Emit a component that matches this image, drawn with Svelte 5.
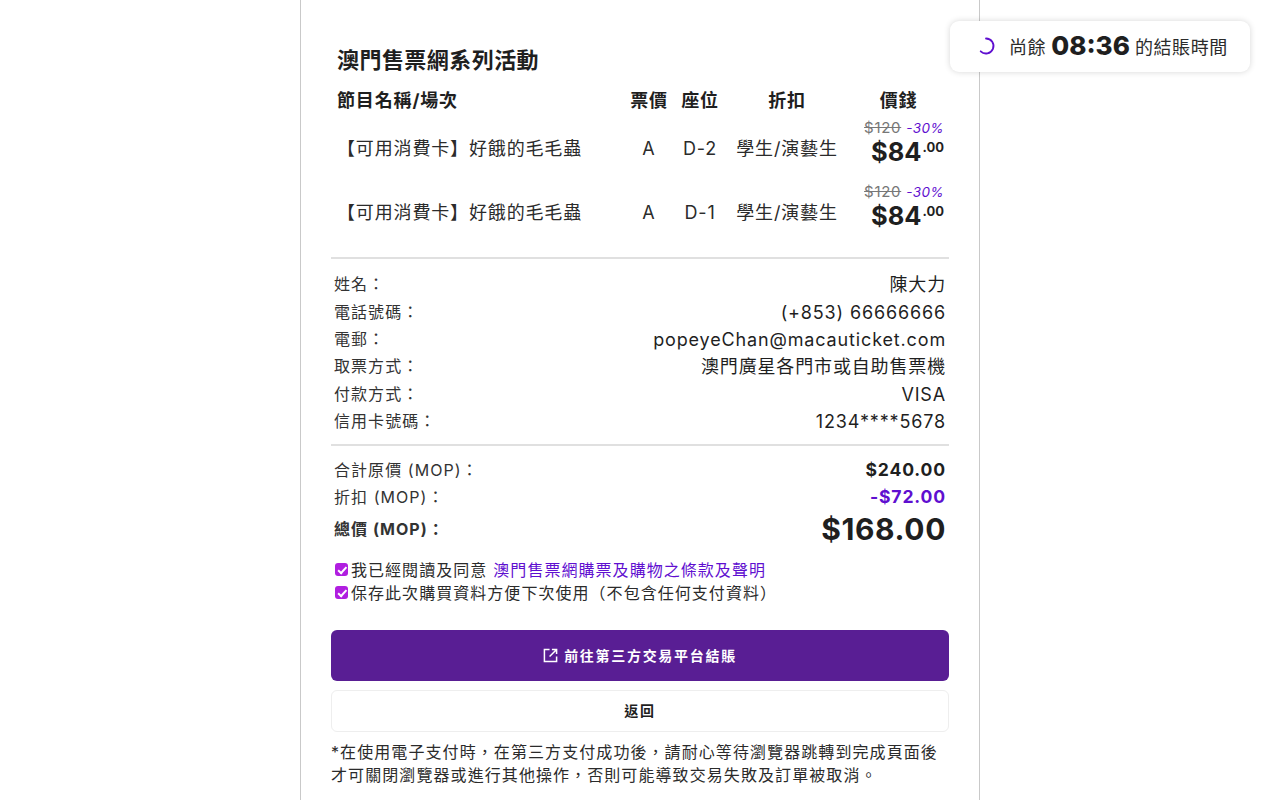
<script>
  const tickets = [
    { name: '【可用消費卡】好餓的毛毛蟲', zone: 'A', seat: 'D-2', type: '學生/演藝生' },
    { name: '【可用消費卡】好餓的毛毛蟲', zone: 'A', seat: 'D-1', type: '學生/演藝生' }
  ];

  const buyer = [
    ['姓名：', '陳大力'],
    ['電話號碼：', '(+853) 66666666'],
    ['電郵：', 'popeyeChan@macauticket.com'],
    ['取票方式：', '澳門廣星各門市或自助售票機'],
    ['付款方式：', 'VISA'],
    ['信用卡號碼：', '1234****5678']
  ];
</script>

<div class="page">
  <main class="panel">
    <h2>澳門售票網系列活動</h2>

    <div class="row head">
      <div class="name">節目名稱/場次</div>
      <div>票價</div>
      <div>座位</div>
      <div>折扣</div>
      <div class="total-col">價錢</div>
    </div>
    {#each tickets as t}
      <div class="row item">
        <div class="name">{t.name}</div>
        <div>{t.zone}</div>
        <div>{t.seat}</div>
        <div>{t.type}</div>
        <div class="price">
          <div class="was"><s>$120</s><em>-30%</em></div>
          <div class="now">$84<sup>.00</sup></div>
        </div>
      </div>
    {/each}

    <hr class="first" />

    <div class="info">
      {#each buyer as b}
        <div class="line"><span class="label">{b[0]}</span><span class="val">{b[1]}</span></div>
      {/each}
    </div>

    <hr class="second" />

    <div class="totals">
      <div class="line"><span class="label">合計原價 (MOP)：</span><span class="val bold">$240.00</span></div>
      <div class="line"><span class="label">折扣 (MOP)：</span><span class="val bold purple">-$72.00</span></div>
      <div class="line total"><span class="label">總價 (MOP)：</span><span class="big">$168.00</span></div>
    </div>

    <div class="checks">
      <label><input type="checkbox" checked />我已經閱讀及同意 <a href="#terms">澳門售票網購票及購物之條款及聲明</a></label>
      <label><input type="checkbox" checked />保存此次購買資料方便下次使用（不包含任何支付資料）</label>
    </div>

    <button class="pay">
      <svg width="15" height="15" viewBox="0 0 16 16" fill="none" stroke="currentColor" stroke-width="1.6">
        <path d="M7 1.5H1.5v13h13V9" />
        <path d="M9.5 1.5h5v5M14.5 1.5 7 9" />
      </svg>
      前往第三方交易平台結賬
    </button>
    <button class="back">返回</button>

    <p class="note">*在使用電子支付時，在第三方支付成功後，請耐心等待瀏覽器跳轉到完成頁面後才可關閉瀏覽器或進行其他操作，否則可能導致交易失敗及訂單被取消。</p>
  </main>

  <div class="timer">
    <svg class="spin" width="20" height="20" viewBox="0 0 20 20" fill="none">
      <path d="M10 2.5A7.5 7.5 0 1 1 4.7 15.3" stroke="#5f0fd0" stroke-width="1.8" stroke-linecap="round" />
    </svg>
    <span>尚餘</span>
    <b>08:36</b>
    <span>的結賬時間</span>
  </div>
</div>

<style>
  :global(body) {
    background: #fff;
    color: #1f1f1f;
    font-family: Inter, "Noto Sans CJK TC", sans-serif;
  }
  .page {
    position: relative;
    height: 800px;
    overflow: hidden;
  }
  .panel {
    box-sizing: border-box;
    width: 680px;
    height: 800px;
    margin-left: 300px;
    padding: 45px 30px 0;
    border-left: 1px solid #c9c9c9;
    border-right: 1px solid #c9c9c9;
  }
  h2 {
    margin: 0 0 0 6px;
    font-size: 22px;
    line-height: 31px;
    font-weight: 700;
    letter-spacing: 0.45px;
  }
  .row {
    box-sizing: border-box;
    display: grid;
    grid-template-columns: 288px 60px 42px 132px 1fr;
    align-items: center;
    padding-top: 4px;
    text-align: center;
    font-size: 18px;
    line-height: 26px;
    letter-spacing: 0.85px;
  }
  .row .name {
    text-align: left;
    padding-left: 6px;
  }
  .head {
    margin: 8px 0 2px;
    height: 29px;
    font-weight: 700;
  }
  .head .total-col {
    padding-right: 5px;
  }
  .item {
    height: 64px;
    color: #2b2b2b;
  }
  .price {
    text-align: right;
    padding: 0 5px 12px 0;
  }
  .was {
    font-size: 13.5px;
    line-height: 17px;
    letter-spacing: 0.4px;
    color: #777;
  }
  .was s {
    font-size: 15px;
    letter-spacing: 0.7px;
  }
  .was em {
    margin-left: 5px;
    color: #5f0fd0;
  }
  .now {
    font-size: 25.5px;
    line-height: 30px;
    font-weight: 700;
    letter-spacing: 0;
    color: #1f1f1f;
  }
  .now sup {
    margin-left: 1px;
    font-size: 13px;
    line-height: 0;
    vertical-align: 9px;
  }
  hr {
    height: 2px;
    margin: 0;
    border: 0;
    background: #e0e0e0;
  }
  hr.first {
    margin-top: 14px;
  }
  .info {
    padding-top: 10px;
  }
  .line {
    box-sizing: border-box;
    display: flex;
    justify-content: space-between;
    align-items: center;
    padding: 4px 3px 0;
    height: 27.4px;
    font-size: 18px;
    line-height: 23px;
    letter-spacing: 0.85px;
  }
  .label {
    font-size: 16px;
    letter-spacing: 1.05px;
    color: #333;
  }
  hr.second {
    margin-top: 11px;
  }
  .totals {
    padding-top: 8px;
  }
  .bold {
    margin-bottom: 2px;
    font-weight: 700;
    font-size: 17.6px;
  }
  .purple {
    color: #5f0fd0;
  }
  .line.total {
    height: 38px;
    margin-top: 1px;
    padding-top: 0;
  }
  .total .label {
    font-weight: 700;
  }
  .big {
    font-size: 30px;
    font-weight: 700;
    letter-spacing: 0.6px;
  }
  .checks {
    margin-top: 11px;
    padding-left: 4px;
    font-size: 16px;
    letter-spacing: 1.04px;
    line-height: 23px;
  }
  .checks label {
    display: flex;
    align-items: center;
    color: #2b2b2b;
  }
  .checks input {
    appearance: none;
    position: relative;
    width: 13px;
    height: 13px;
    margin: 0 3px 2px 0;
    border-radius: 3px;
    background: #b01ee0;
  }
  .checks input::after {
    content: "";
    position: absolute;
    left: 4.5px;
    top: 1.5px;
    width: 3px;
    height: 6.5px;
    border: solid #fff;
    border-width: 0 2px 2px 0;
    transform: rotate(42deg);
  }
  .checks a {
    margin-left: 6px;
    color: #5f0fd0;
    text-decoration: none;
  }
  button {
    display: flex;
    align-items: center;
    justify-content: center;
    gap: 6px;
    width: 100%;
    padding: 0 0 2px;
    font-family: inherit;
    font-weight: 700;
    font-size: 14px;
    letter-spacing: 1.7px;
    border-radius: 6px;
  }
  button svg {
    margin-top: 2px;
  }
  .pay {
    height: 51px;
    margin-top: 25px;
    border: 0;
    background: #591e94;
    color: #fff;
  }
  .back {
    height: 42px;
    margin-top: 9px;
    border: 1px solid #eee;
    background: #fff;
    color: #1f1f1f;
  }
  .note {
    margin: 9px 0 0;
    font-size: 16px;
    line-height: 23px;
    letter-spacing: 1.08px;
    color: #2b2b2b;
  }
  .timer {
    position: absolute;
    top: 21px;
    left: 950px;
    box-sizing: border-box;
    width: 300px;
    height: 51px;
    display: flex;
    align-items: center;
    gap: 5px;
    padding: 0 0 2px 26px;
    background: #fff;
    border-radius: 9px;
    box-shadow: 0 0 6px rgba(0, 0, 0, 0.16);
    font-size: 18px;
    letter-spacing: 0.6px;
    color: #2b2b2b;
  }
  .timer .spin {
    margin-right: 8px;
  }
  .timer b {
    font-size: 26px;
    font-weight: 800;
    letter-spacing: 0;
    color: #1f1f1f;
  }
</style>
